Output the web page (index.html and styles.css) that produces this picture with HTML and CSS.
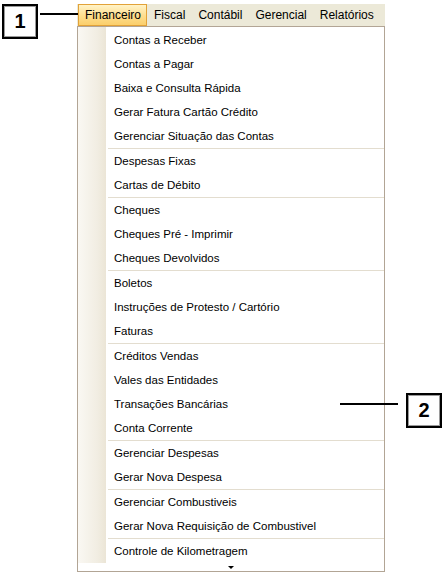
FILE: index.html
```html
<!DOCTYPE html>
<html lang="pt">
<head>
<meta charset="utf-8">
<title>Menu Financeiro</title>
<link rel="stylesheet" href="styles.css">
</head>
<body>
<div class="page">
  <div class="callout callout-1">1</div>
  <div class="leader leader-1"></div>
  <div class="callout callout-2">2</div>
  <div class="leader leader-2"></div>

  <div class="menu">
    <div class="menubar">
      <span class="top-item active">Financeiro</span>
      <span class="top-item">Fiscal</span>
      <span class="top-item">Contábil</span>
      <span class="top-item">Gerencial</span>
      <span class="top-item">Relatórios</span>
    </div>
    <div class="dropdown">
      <div class="dropdown-body">
        <div class="gutter"></div>
        <ul class="items">
          <li class="item">Contas a Receber</li>
          <li class="item">Contas a Pagar</li>
          <li class="item">Baixa e Consulta Rápida</li>
          <li class="item">Gerar Fatura Cartão Crédito</li>
          <li class="item">Gerenciar Situação das Contas</li>
          <li class="sep"></li>
          <li class="item">Despesas Fixas</li>
          <li class="item">Cartas de Débito</li>
          <li class="sep"></li>
          <li class="item">Cheques</li>
          <li class="item">Cheques Pré - Imprimir</li>
          <li class="item">Cheques Devolvidos</li>
          <li class="sep"></li>
          <li class="item">Boletos</li>
          <li class="item">Instruções de Protesto / Cartório</li>
          <li class="item">Faturas</li>
          <li class="sep"></li>
          <li class="item">Créditos Vendas</li>
          <li class="item">Vales das Entidades</li>
          <li class="item">Transações Bancárias</li>
          <li class="item">Conta Corrente</li>
          <li class="sep"></li>
          <li class="item">Gerenciar Despesas</li>
          <li class="item">Gerar Nova Despesa</li>
          <li class="sep"></li>
          <li class="item">Gerenciar Combustiveis</li>
          <li class="item">Gerar Nova Requisição de Combustivel</li>
          <li class="sep"></li>
          <li class="item">Controle de Kilometragem</li>
        </ul>
      </div>
      <div class="scroll-down"><span class="arrow"></span></div>
    </div>
  </div>
</div>
</body>
</html>
```

FILE: styles.css
```css
html, body {
  margin: 0;
  padding: 0;
  background: #ffffff;
}

.page {
  position: relative;
  width: 446px;
  height: 575px;
  padding-top: 4px;
  box-sizing: border-box;
  font-family: "Liberation Sans", Arial, sans-serif;
  font-size: 11.5px;
  color: #000;
}

/* callouts */
.callout {
  position: absolute;
  box-sizing: border-box;
  width: 36px;
  height: 35px;
  border: 2px solid #000;
  box-shadow: inset 0 0 0 1px #9a9a9a;
  background: #fff;
  display: flex;
  align-items: center;
  justify-content: center;
  font-family: "Liberation Sans", Arial, sans-serif;
  font-weight: bold;
  font-size: 20px;
}
.callout-1 { left: 2px; top: 4px; }
.callout-2 { left: 406px; top: 393px; }

.leader {
  position: absolute;
  height: 2px;
  background: #000;
}
.leader-1 { left: 40px; top: 13px; width: 38px; }
.leader-2 { left: 340px; top: 403px; width: 58px; }

/* menu */
.menu {
  margin-left: 77px;
  width: 308px;
}

.menubar {
  height: 22px;
  background: #ece9d8;
  display: flex;
  align-items: stretch;
  padding-left: 1px;
  font-size: 12px;
}

.top-item {
  display: flex;
  align-items: center;
  padding: 0 5px 0 6px;
  border: 1px solid transparent;
}
.top-item.active {
  border-color: #e2a238;
  background: linear-gradient(#fff3c8, #fedd8c 55%, #fbcf6c);
}

.dropdown {
  border: 1px solid #b2a595;
  background: #fff;
}

.dropdown-body {
  display: flex;
}

.gutter {
  width: 28px;
  flex: none;
  background: linear-gradient(to right, #faf8f3, #f1ede2 70%, #ebe5d6);
}

.items {
  list-style: none;
  margin: 0;
  padding: 1px 0 0 0;
  flex: 1;
}

.item {
  height: 24px;
  line-height: 24px;
  padding-left: 8px;
  white-space: nowrap;
}

.sep {
  height: 1px;
  margin-left: 2px;
  background: #e3ddcf;
}

.scroll-down {
  height: 8px;
  display: flex;
  justify-content: center;
  align-items: center;
}

.arrow {
  width: 0;
  height: 0;
  border-left: 3px solid transparent;
  border-right: 3px solid transparent;
  border-top: 3px solid #000;
}
```
